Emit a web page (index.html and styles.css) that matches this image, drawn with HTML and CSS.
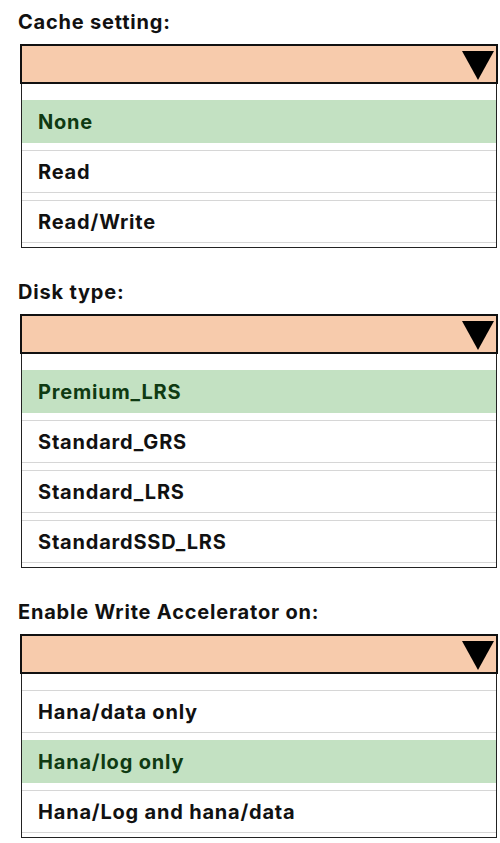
FILE: index.html
```html
<!DOCTYPE html>
<html lang="en">

<head>
    <meta charset="UTF-8">
    <meta name="viewport" content="width=device-width, initial-scale=1.0">
    <title>Disk settings</title>
    <link rel="stylesheet" href="styles.css">
</head>

<body>
    <div class="settings">

        <div class="field">
            <div class="field-label">Cache setting:</div>
            <div class="dropdown"><span class="arrow"></span></div>
            <div class="options">
                <div class="option picked">None</div>
                <div class="option">Read</div>
                <div class="option">Read/Write</div>
            </div>
        </div>

        <div class="field">
            <div class="field-label">Disk type:</div>
            <div class="dropdown"><span class="arrow"></span></div>
            <div class="options">
                <div class="option picked">Premium_LRS</div>
                <div class="option">Standard_GRS</div>
                <div class="option">Standard_LRS</div>
                <div class="option">StandardSSD_LRS</div>
            </div>
        </div>

        <div class="field">
            <div class="field-label">Enable Write Accelerator on:</div>
            <div class="dropdown"><span class="arrow"></span></div>
            <div class="options">
                <div class="option">Hana/data only</div>
                <div class="option picked">Hana/log only</div>
                <div class="option">Hana/Log and hana/data</div>
            </div>
        </div>

    </div>
</body>

</html>
```

FILE: styles.css
```css
body {
    background-color: white;
    color: #111;
    font-family: Inter, "Open Sans", sans-serif;
    margin: 0;
}

.settings {
    width: 478px;
    padding: 10px 0 0 20px;
}

.field {
    margin-bottom: 32px;
}

.field-label {
    font-size: 20px;
    font-weight: 700;
    letter-spacing: 0.8px;
    line-height: 24px;
    margin-left: -2px;
    margin-bottom: 10px;
}

.dropdown {
    box-sizing: border-box;
    height: 40px;
    background-color: #f7cbac;
    border: 2px solid #111;
    display: flex;
    justify-content: flex-end;
    align-items: flex-start;
    padding: 5px 2px 0 0;
}

/* black triangle on the right side of the box */
.arrow {
    width: 0;
    height: 0;
    border-left: 16px solid transparent;
    border-right: 16px solid transparent;
    border-top: 29px solid black;
}

.options {
    margin: 0 1px;
    border: 1px solid #222;
    border-top: none;
    padding: 16px 0 4px;
}

.option {
    box-sizing: border-box;
    height: 43px;
    display: flex;
    align-items: center;
    padding-left: 16px;
    font-size: 20px;
    font-weight: 700;
    letter-spacing: 0.8px;
    border-top: 1px solid #d6d6d6;
    border-bottom: 1px solid #d6d6d6;
    margin-top: 7px;
}

.option:first-child {
    margin-top: 0;
}

.option.picked {
    background-color: #c3e1c2;
    color: #0f3a12;
    border-color: #c3e1c2;
}
```
